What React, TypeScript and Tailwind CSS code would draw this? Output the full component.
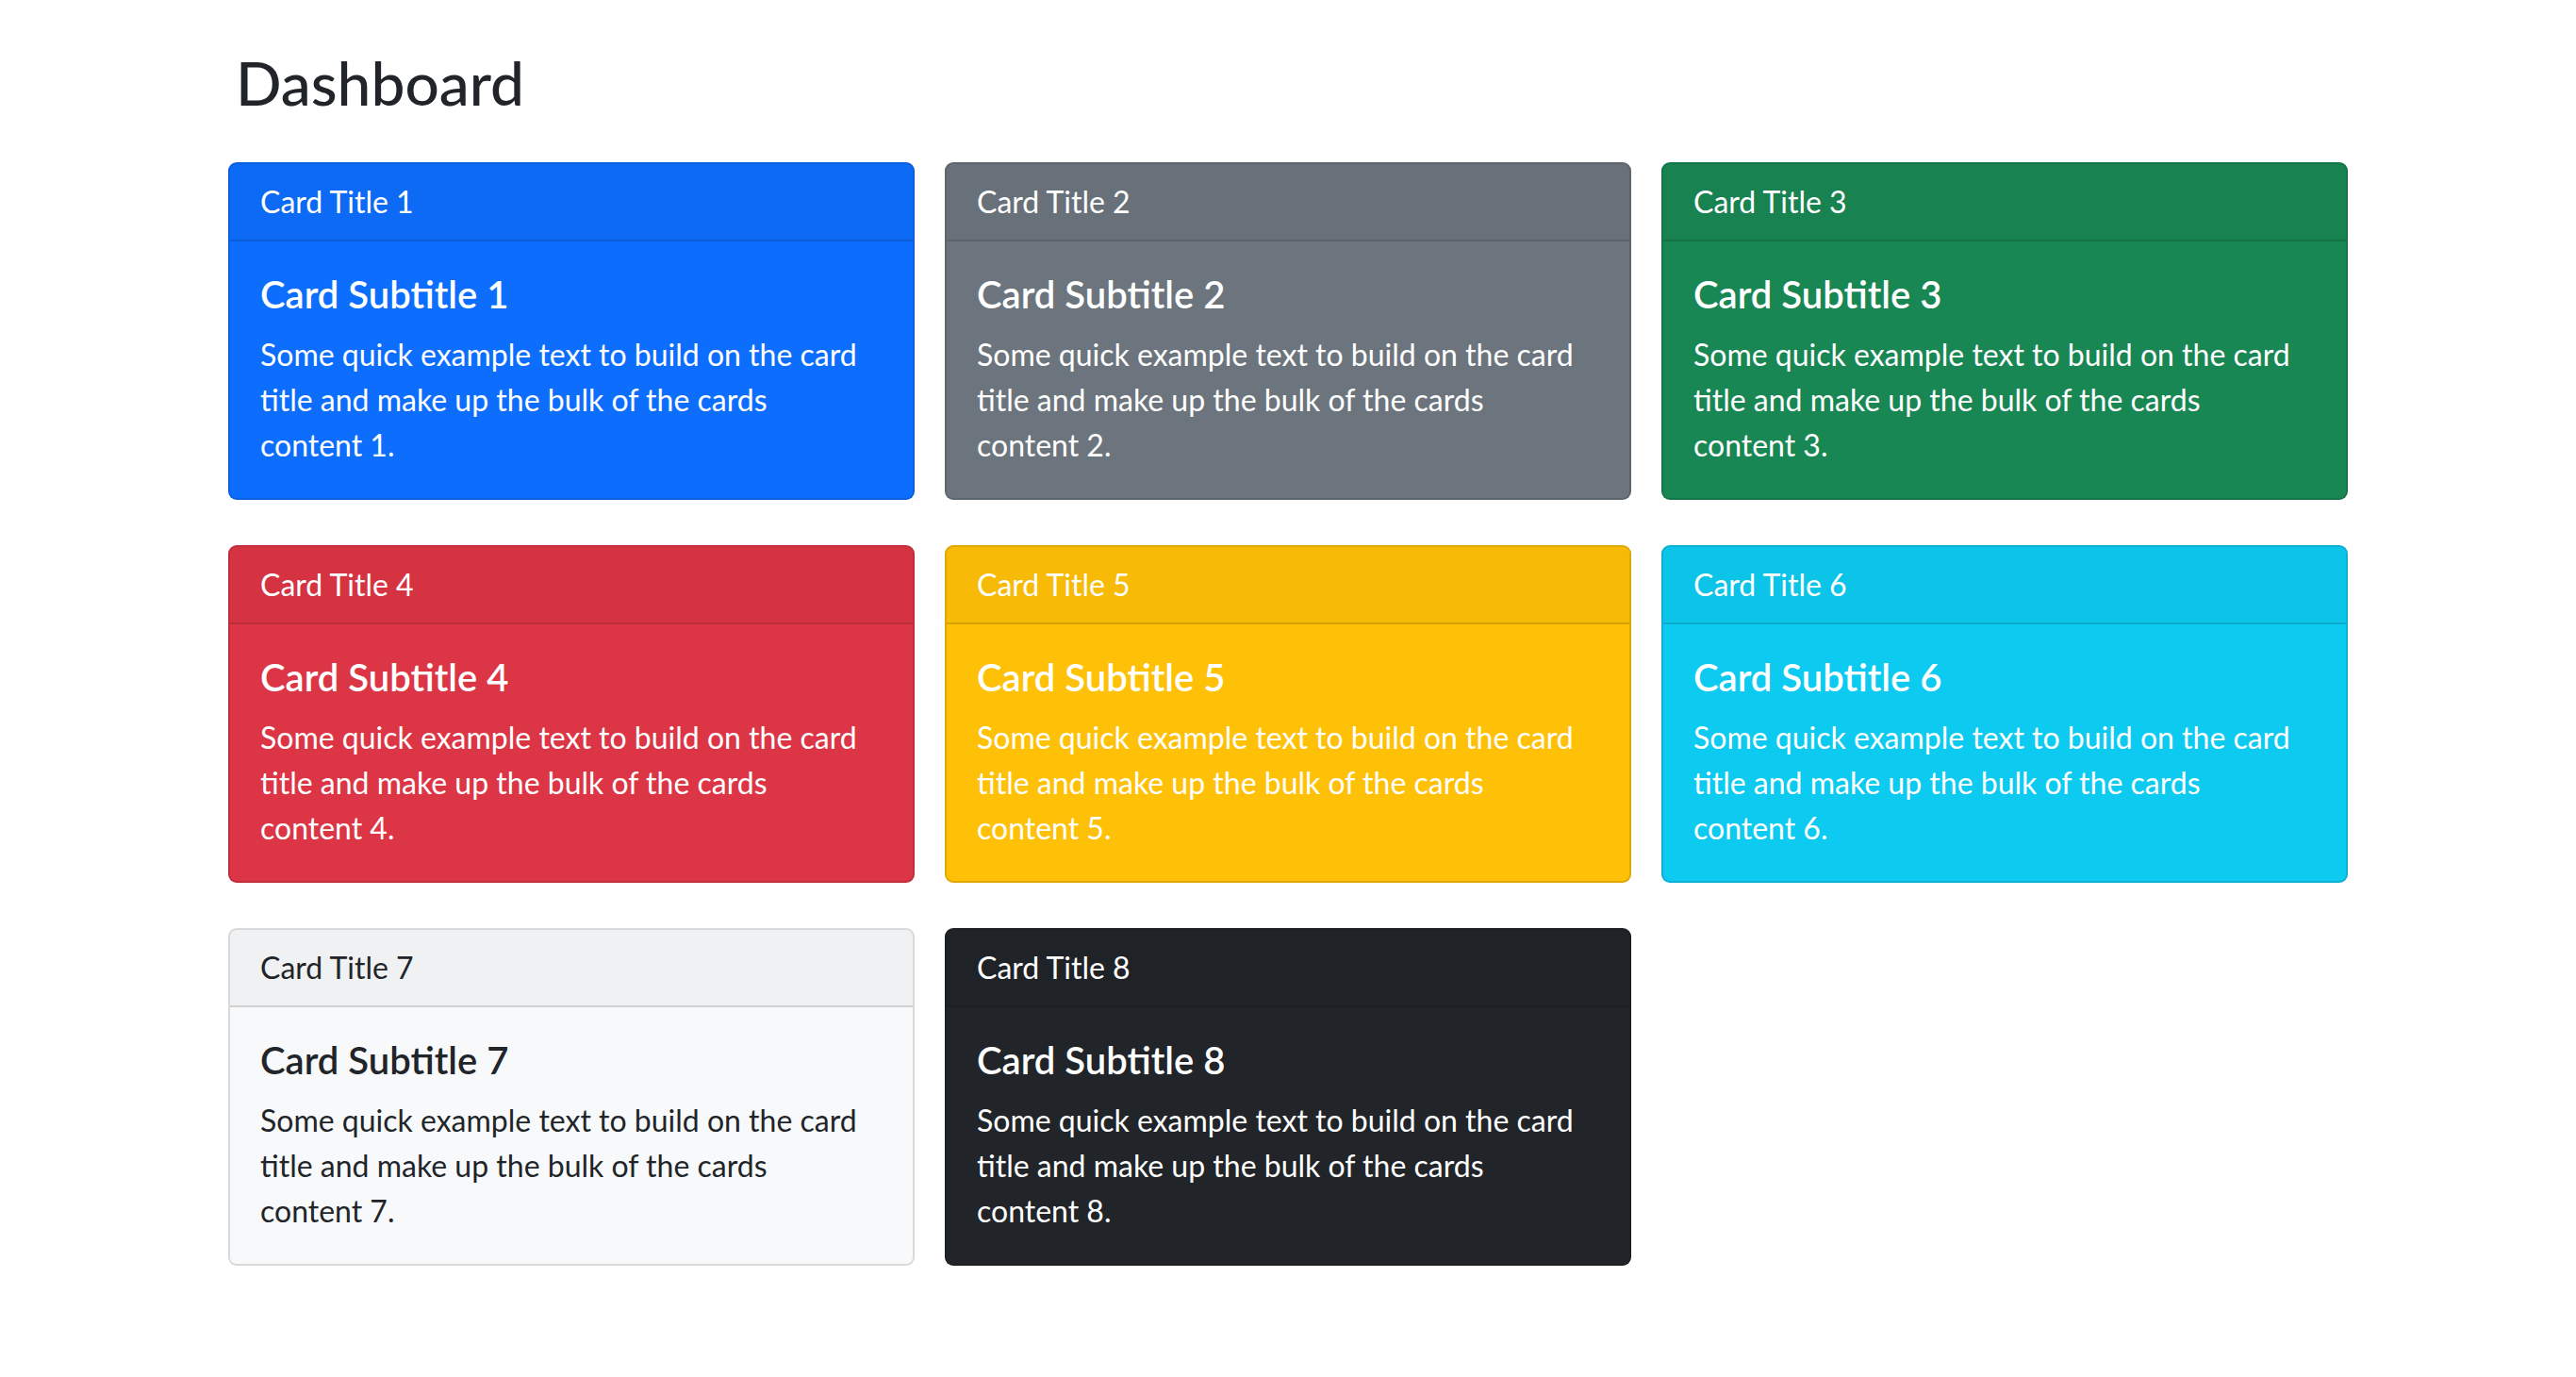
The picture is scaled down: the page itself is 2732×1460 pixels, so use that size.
type CardItem = {
  id: number;
  cardClass: string;
};

const CARDS: CardItem[] = [
  { id: 1, cardClass: "bg-[#0d6efd] text-white" },
  { id: 2, cardClass: "bg-[#6c757d] text-white" },
  { id: 3, cardClass: "bg-[#198754] text-white" },
  { id: 4, cardClass: "bg-[#dc3545] text-white" },
  { id: 5, cardClass: "bg-[#ffc107] text-white" },
  { id: 6, cardClass: "bg-[#0dcaf0] text-white" },
  { id: 7, cardClass: "bg-[#f8f9fa] text-[#212529]" },
  { id: 8, cardClass: "bg-[#212529] text-white" },
];

function Card({ item }: { item: CardItem }) {
  return (
    <div className={`flex flex-col rounded-[9px] border-2 border-black/[0.125] overflow-hidden ${item.cardClass}`}>
      <div className="px-[32px] py-[16px] text-[32px] leading-[48px] bg-black/[0.03] border-b-2 border-black/[0.125]">
        Card Title {item.id}
      </div>
      <div className="p-[32px]">
        <h5 className="text-[40px] leading-[48px] font-semibold mb-[16px]">Card Subtitle {item.id}</h5>
        {/* narrower measure so lines break like the reference font */}
        <p className="max-w-[645px] text-[32px] leading-[48px]">
          Some quick example text to build on the card title and make up the bulk of the cards content {item.id}.
        </p>
      </div>
    </div>
  );
}

export default function App() {
  return (
    <div className="min-h-screen bg-white font-['Lato',sans-serif] text-[#212529]">
      <div className="w-[2248px] mx-auto pt-[50px]">
        <h2 className="pl-[8px] mb-[45px] text-[64px] leading-[76.8px] font-medium">Dashboard</h2>
        <div className="grid grid-cols-3 gap-x-[32px] gap-y-[48px]">
          {CARDS.map((c) => (
            <Card key={c.id} item={c} />
          ))}
        </div>
      </div>
    </div>
  );
}
